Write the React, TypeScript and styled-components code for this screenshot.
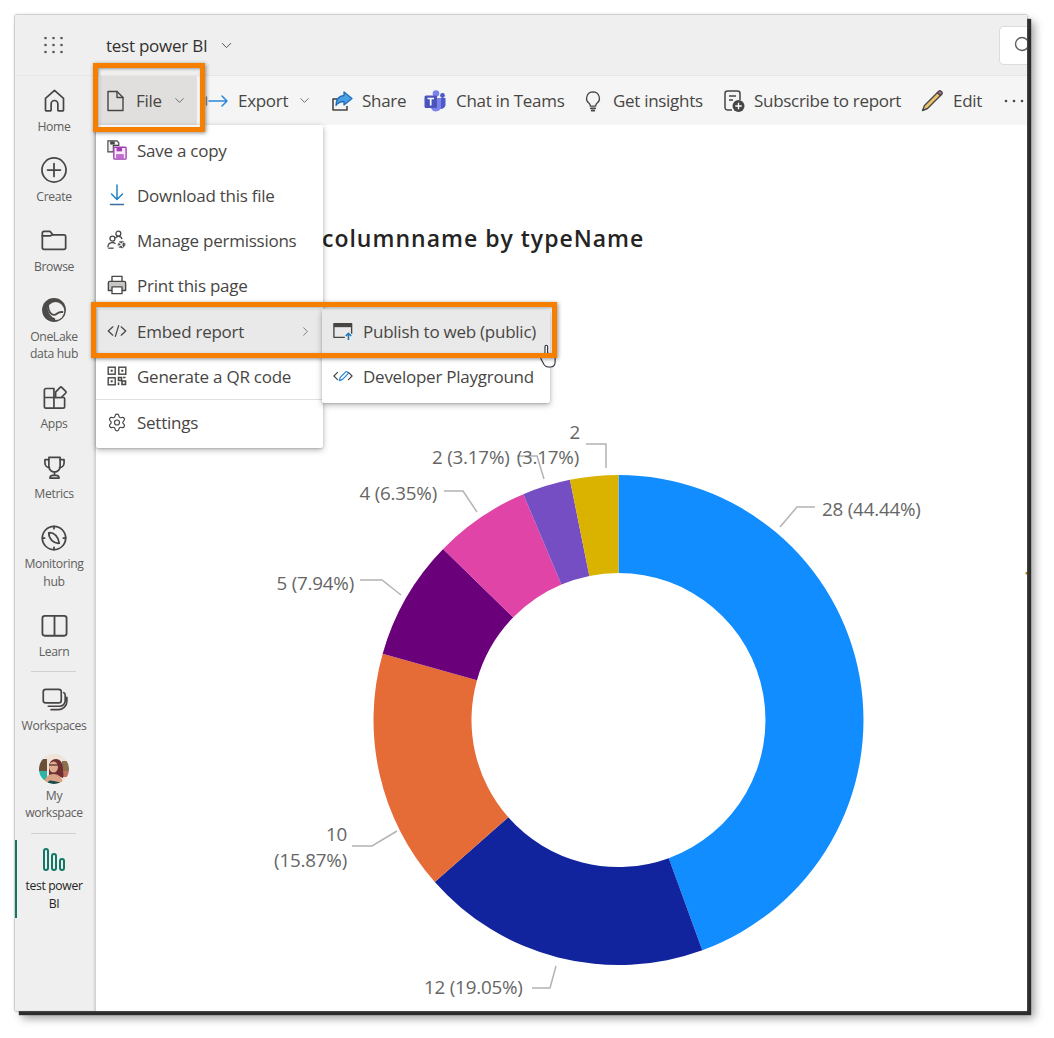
import React from "react";
import styled, { createGlobalStyle } from "styled-components";
import { ChevronDown, ChevronRight, Settings } from "lucide-react";

const INK = "#484644";
const FONT = `"Open Sans", "Noto Sans", Arial, sans-serif`;

const GlobalStyle = createGlobalStyle`
  html, body {
    margin: 0;
    background: #fff;
    font-family: ${FONT};
  }
`;

const Page = styled.div`
  width: 1054px;
  height: 1038px;
  padding: 15px 0 0 15px;
  box-sizing: border-box;
  overflow: hidden;
`;

const Frame = styled.div`
  position: relative;
  width: 1012px;
  height: 996px;
  background: #fff;
  display: flex;
  flex-direction: column;
  box-shadow: 0 0 2px #777, 4px 4px 1px #2c2c2c, 7px 7px 9px rgba(0, 0, 0, 0.4);
`;

const TopBar = styled.header`
  height: 60px;
  flex: none;
  display: flex;
  align-items: center;
  background: #efefef;
  overflow: hidden;
`;

const Waffle = styled.div`
  width: 78px;
  flex: none;
  display: flex;
  justify-content: center;
`;

const ReportName = styled.div`
  display: flex;
  align-items: center;
  gap: 11px;
  margin-left: 13px;
  flex: 1;
  font-size: 17px;
  letter-spacing: -0.25px;
  color: #323130;
`;

const SearchBox = styled.div`
  width: 28px;
  height: 39px;
  margin-top: 1px;
  background: #fff;
  border: 1px solid #dcdcdc;
  border-right: 0;
  border-radius: 5px 0 0 5px;
  display: flex;
  align-items: center;
  padding-left: 14px;
  flex: none;
  box-sizing: border-box;
  overflow: hidden;
`;

const SearchGlyph = styled.svg`
  flex: none;
`;

const Body = styled.div`
  flex: 1;
  min-height: 0;
  display: flex;
`;

const Rail = styled.nav`
  width: 81px;
  flex: none;
  background: #efefef;
  box-shadow: inset -2px 0 2px rgba(0, 0, 0, 0.12);
  display: flex;
  flex-direction: column;
  align-items: stretch;
`;

const RailItem = styled.a<{ $active?: boolean; $gap?: number }>`
  display: flex;
  flex-direction: column;
  align-items: center;
  margin-top: ${(p) => p.$gap ?? 0}px;
  margin-right: 5px;
  padding: ${(p) => (p.$active ? "8px 0 6px" : "13px 0 10px")};
  font-size: 12.2px;
  font-weight: ${(p) => (p.$active ? 500 : 400)};
  line-height: 17.5px;
  letter-spacing: -0.35px;
  text-align: center;
  color: ${(p) => (p.$active ? "#252423" : "#605e5c")};
  border-left: 2px solid ${(p) => (p.$active ? "#117865" : "transparent")};
`;

const RailIcon = styled.span`
  height: 24px;
  margin-bottom: 5.5px;
  display: flex;
  align-items: center;
  justify-content: center;
`;

const RailRule = styled.hr`
  width: 45px;
  height: 1px;
  margin: 1px 0 0 16px;
  border: 0;
  background: #d2d0ce;
`;

const Main = styled.main`
  position: relative;
  flex: 1;
  min-width: 0;
  display: flex;
  flex-direction: column;
`;

const Toolbar = styled.div`
  height: 50px;
  flex: none;
  display: flex;
  align-items: center;
  padding-left: 4px;
  background: #f5f5f5;
  border-top: 1px solid #e6e6e6;
  box-sizing: border-box;
  overflow: hidden;
  white-space: nowrap;
`;

const ToolButton = styled.div<{ $width: number; $open?: boolean; $inset?: number }>`
  width: ${(p) => p.$width}px;
  flex: none;
  height: 50px;
  display: flex;
  align-items: center;
  gap: 9px;
  box-sizing: border-box;
  padding-left: ${(p) => p.$inset ?? 0}px;
  font-size: 17px;
  letter-spacing: -0.3px;
  color: ${INK};
  background: ${(p) => (p.$open ? "#e1dfdd" : "transparent")};
`;

const ToolChevron = styled(ChevronDown)<{ $shift: number }>`
  margin-left: ${(p) => p.$shift}px;
  color: ${INK};
`;

const Overflow = styled.svg`
  flex: none;
`;

const Canvas = styled.section`
  flex: 1;
  min-height: 0;
  display: flex;
  flex-direction: column;
`;

const ChartTitle = styled.h2`
  margin: 96px 0 0 226px;
  height: 35px;
  font-family: "Open Sans", sans-serif;
  font-size: 23px;
  line-height: 35px;
  font-weight: 600;
  letter-spacing: 1px;
  color: #252423;
  white-space: nowrap;
`;

const Chart = styled.svg`
  display: block;
  margin-top: 44px;
  font-family: ${FONT};
`;

const Menu = styled.div`
  position: absolute;
  background: #fff;
  border-radius: 2px;
  box-shadow: 0 2px 6px rgba(0, 0, 0, 0.28), 0 1px 2px rgba(0, 0, 0, 0.15);
`;

const FileMenu = styled(Menu)`
  left: 0;
  top: 50px;
  width: 227px;
  padding: 2.5px 0 3.5px;
  z-index: 2;
`;

const SubMenu = styled(Menu)`
  left: 226px;
  top: 183.5px;
  width: 228px;
  padding: 0 0 4.5px;
  z-index: 3;
`;

const MenuItem = styled.div<{ $hot?: boolean; $gap?: number }>`
  height: 45px;
  display: flex;
  align-items: center;
  gap: 10px;
  margin-top: ${(p) => p.$gap ?? 0}px;
  padding: 0 11px;
  font-size: 17px;
  letter-spacing: -0.25px;
  color: ${INK};
  white-space: nowrap;
  background: ${(p) => (p.$hot ? "#e9e9e9" : "transparent")};
`;

const MenuIcon = styled.span`
  width: 20px;
  height: 22px;
  flex: none;
  display: flex;
  align-items: center;
  justify-content: center;
`;

const MenuRule = styled.hr`
  height: 1px;
  margin: 0;
  border: 0;
  background: #e1dfdd;
`;

const Arrow = styled.span`
  margin-left: auto;
  display: flex;
  margin-right: -1px;
`;

const Callout = styled.div<{ $x: number; $y: number; $w: number; $h: number }>`
  position: absolute;
  left: ${(p) => p.$x}px;
  top: ${(p) => p.$y}px;
  width: ${(p) => p.$w}px;
  height: ${(p) => p.$h}px;
  border: 5px solid #f77f00;
  box-sizing: border-box;
  box-shadow: 1px 1px 4px rgba(0, 0, 0, 0.45), inset 1px 1px 3px rgba(0, 0, 0, 0.35);
  z-index: 5;
  pointer-events: none;
`;

const HandCursor = styled.svg`
  position: absolute;
  left: 525px;
  top: 329px;
  z-index: 4;
`;

type SvgProps = { size?: number; children: React.ReactNode; sw?: number };

function Glyph({ size = 24, sw = 1.5, children }: SvgProps) {
  return (
    <svg
      width={size}
      height={size}
      viewBox="0 0 24 24"
      fill="none"
      stroke={INK}
      strokeWidth={sw}
      strokeLinecap="round"
      strokeLinejoin="round"
    >
      {children}
    </svg>
  );
}

const railIcons: Record<string, React.ReactNode> = {
  home: (
    <Glyph size={27}>
      <path d="M4 20.500V10.200L12 3l8 7.200v10.300a.8.8 0 0 1-.8.8h-3.400a.8.8 0 0 1-.8-.8V15a3 3 0 0 0-6 0v5.500a.8.8 0 0 1-.8.8H4.800a.8.8 0 0 1-.8-.8z" />
    </Glyph>
  ),
  create: (
    <Glyph size={28}>
      <circle cx="12" cy="12" r="10.300" />
      <path d="M12 6.500v11M6.500 12h11" />
    </Glyph>
  ),
  browse: (
    <Glyph size={28}>
      <path d="M2 18.500V6a1.500 1.500 0 0 1 1.500-1.500h5l2.500 3h9.500A1.500 1.500 0 0 1 22 9v9.500a1.500 1.500 0 0 1-1.500 1.500h-17A1.500 1.500 0 0 1 2 18.500z" />
      <path d="M2 8.500h6.500l2.500-1" />
    </Glyph>
  ),
  lake: (
    <svg width="26" height="26" viewBox="0 0 24 24" fill="none">
      <circle cx="12" cy="12" r="11" fill="#4d4b49" />
      <ellipse cx="13.500" cy="13" rx="8" ry="8.300" fill="#efefef" />
      <path d="M6.500 7.500c0 5 2.500 9.500 6 9 3-.4 2.500-3.500 8-2.500" stroke="#4d4b49" strokeWidth="1.700" />
      <path d="M5 8c-.5 6 3 12 8 13" stroke="#4d4b49" strokeWidth="2.200" />
    </svg>
  ),
  apps: (
    <Glyph size={27}>
      <path d="M3 12h8.500v9.500H4.500A1.500 1.500 0 0 1 3 20zM3 12V5.500A1.500 1.500 0 0 1 4.500 4h7v17.500M11.500 12H20a1 1 0 0 1 1 1v7a1.500 1.500 0 0 1-1.500 1.500h-8" />
      <path d="M13 7.200l4-4.200a1 1 0 0 1 1.400 0l3.600 3.600a1 1 0 0 1 0 1.400L18 12h-5z" fill="#efefef" />
    </Glyph>
  ),
  metrics: (
    <Glyph size={27}>
      <path d="M7 3h10v8a5 5 0 0 1-10 0z" />
      <path d="M7 5H3.500v3A4 4 0 0 0 7.500 12M17 5h3.500v3a4 4 0 0 1-4 4" />
      <path d="M12 16v3M8 21.500c0-1.500 1-2.500 2.500-2.500h3c1.500 0 2.500 1 2.500 2.500z" />
    </Glyph>
  ),
  monitor: (
    <Glyph size={28} sw={1.500}>
      <circle cx="12" cy="12" r="10" />
      <path d="M12 2v2M12 20v2M2 12h2M20 12h2" />
      <path d="M7.500 7.500c4.500-.5 8.500 3.500 9 9-4.500.5-9-3.500-9-9z" />
    </Glyph>
  ),
  learn: (
    <Glyph size={29}>
      <rect x="2" y="4" width="20" height="16.500" rx="2" />
      <path d="M12 4.500v15.500" />
    </Glyph>
  ),
  workspaces: (
    <Glyph size={27}>
      <rect x="2" y="3" width="16" height="12" rx="2.200" />
      <path d="M20.300 6c.8.400 1.200 1.200 1.200 2v5a5 5 0 0 1-5 5H6.500" />
      <path d="M23 10v3.500a7.500 7.500 0 0 1-7.500 7.500H9" />
    </Glyph>
  ),
};

function Avatar() {
  return (
    <svg width="30" height="30" viewBox="0 0 30 30">
      <defs>
        <clipPath id="avatarClip">
          <circle cx="15" cy="15" r="15" />
        </clipPath>
        <filter id="avatarSoft">
          <feGaussianBlur stdDeviation="0.7" />
        </filter>
      </defs>
      <g clipPath="url(#avatarClip)">
        <g filter="url(#avatarSoft)">
          <rect width="30" height="30" fill="#efe3da" />
          <rect x="-1" y="5" width="9" height="12" fill="#6b5138" />
          <rect x="23" y="7" width="8" height="10" fill="#8a6f4c" />
          <rect x="-1" y="17" width="9" height="9" fill="#2fb3a6" />
          <rect x="24" y="17" width="7" height="6" fill="#c4705f" />
          <path d="M10 13c0-5 3-8 7-8 5 0 7 5 7 10 0 4 1 6 0 9l-5-2-9-1z" fill="#6e2f30" />
          <ellipse cx="14.500" cy="13" rx="4.500" ry="5.500" fill="#e0ad90" />
          <path d="M10 11h9" stroke="#4a2a25" strokeWidth="1.200" />
          <path d="M5 31c0-7 4-11 9.500-11S24 24 24 31z" fill="#d9a285" />
          <path d="M8 31c1-5 3-5 6.500-4S21 27 22 31z" fill="#154a48" />
        </g>
      </g>
    </svg>
  );
}

function ReportGlyph() {
  return (
    <svg width="24" height="24" viewBox="0 0 24 24" fill="none" stroke="#117865" strokeWidth="2">
      <rect x="2" y="1" width="4" height="21" rx="2" />
      <rect x="10" y="6" width="4" height="16" rx="2" />
      <rect x="18" y="11" width="4" height="11" rx="2" />
    </svg>
  );
}

const NAV = [
  { key: "home", lines: ["Home"] },
  { key: "create", lines: ["Create"] },
  { key: "browse", lines: ["Browse"] },
  { key: "lake", lines: ["OneLake", "data hub"] },
  { key: "apps", lines: ["Apps"] },
  { key: "metrics", lines: ["Metrics"] },
  { key: "monitor", lines: ["Monitoring", "hub"] },
  { key: "learn", lines: ["Learn"] },
];

function RailEntry({ icon, lines, active, gap }: { icon: React.ReactNode; lines: string[]; active?: boolean; gap?: number }) {
  return (
    <RailItem $active={active} $gap={gap}>
      <RailIcon>{icon}</RailIcon>
      {lines.map((line) => (
        <span key={line}>{line}</span>
      ))}
    </RailItem>
  );
}

const toolIcons = {
  file: (
    <Glyph size={24} sw={1.400}>
      <path d="M5 2.500h9l6 6v13H5z" />
      <path d="M14 2.500v6h6" />
    </Glyph>
  ),
  export: (
    <svg width="24" height="24" viewBox="0 0 24 24" fill="none" strokeLinecap="round">
      <path d="M1.500 8v8" stroke="#8a8886" strokeWidth="1.500" />
      <path d="M4 12h18M17 7l5 5-5 5" stroke="#2b88d8" strokeWidth="1.500" strokeLinejoin="round" />
    </svg>
  ),
  share: (
    <svg width="22" height="22" viewBox="0 0 22 22" fill="none" strokeLinejoin="round">
      <path d="M2 8.500V20h14v-4" stroke={INK} strokeWidth="1.600" />
      <path d="M2 9h4" stroke={INK} strokeWidth="1.600" />
      <path d="M13 2l8 6.500-8 6.500v-3.500c-4 0-6 1-8 4 0-6 3-9.500 8-10z" fill="#4aa0e6" stroke="#1f6fb5" strokeWidth="1.300" />
    </svg>
  ),
  teams: (
    <svg width="23" height="24" viewBox="0 0 23 24">
      <circle cx="12" cy="4.500" r="3.300" fill="#7b83eb" />
      <circle cx="18.500" cy="6.500" r="2.400" fill="#5059c9" />
      <path d="M14 9h7.500v7a4 4 0 0 1-7 2.500z" fill="#5059c9" />
      <path d="M7 9h10v9a5.200 5.200 0 0 1-10 1z" fill="#7b83eb" />
      <rect x="0.500" y="6.500" width="12.500" height="12.500" rx="1.500" fill="#4b53bc" />
      <path d="M3.500 9.500h6.500M6.700 9.500v7" stroke="#fff" strokeWidth="1.700" />
    </svg>
  ),
  insights: (
    <Glyph size={22} sw={1.400}>
      <path d="M12 2a7 7 0 0 0-4 12.700c.8.800 1 1.500 1 2.800h6c0-1.300.2-2 1-2.800A7 7 0 0 0 12 2z" />
      <path d="M9.500 20h5M10.500 22.500h3" strokeWidth="1.800" />
    </Glyph>
  ),
  subscribe: (
    <svg width="22" height="24" viewBox="0 0 22 24" fill="none">
      <path d="M9 21H4.500A2.500 2.500 0 0 1 2 18.500v-14A2.500 2.500 0 0 1 4.500 2h10A2.500 2.500 0 0 1 17 4.500V11" stroke={INK} strokeWidth="1.500" />
      <path d="M6 7h7M6 11h4" stroke={INK} strokeWidth="1.500" />
      <circle cx="15.500" cy="17" r="6" fill={INK} />
      <path d="M15.500 13.800v6.400M12.300 17h6.400" stroke="#fff" strokeWidth="1.300" />
    </svg>
  ),
  edit: (
    <svg width="24" height="24" viewBox="0 0 24 24" strokeLinejoin="round">
      <path d="M17.500 3.500l3 3L7.500 19.500l-5 2 2-5z" fill="#eac36a" stroke={INK} strokeWidth="1.400" />
      <path d="M17.500 3.500l1.300-1.300a1.500 1.500 0 0 1 2.100 0l.9.900a1.500 1.500 0 0 1 0 2.100l-1.300 1.300z" fill="#b56bb0" stroke={INK} strokeWidth="1.400" />
    </svg>
  ),
};

const menuIcons = {
  save: (
    <svg width="22" height="22" viewBox="0 0 22 22" fill="none">
      <path d="M1 1h10l2 2v3H7v7H1z" fill="#f3f2f1" stroke={INK} strokeWidth="1.300" />
      <rect x="3.500" y="1.500" width="5" height="3.500" fill={INK} />
      <rect x="7.500" y="8" width="13.500" height="13" rx="1" fill="#fbe9fb" stroke="#a33cb5" strokeWidth="1.500" />
      <rect x="10.500" y="8.500" width="6" height="4" fill="#a33cb5" />
      <rect x="10" y="15.500" width="8.500" height="5" fill="#a33cb5" opacity="0.7" />
    </svg>
  ),
  download: (
    <svg width="20" height="22" viewBox="0 0 20 22" fill="none" stroke="#2382c5" strokeWidth="1.500" strokeLinecap="round" strokeLinejoin="round">
      <path d="M10 1v14M4.500 10l5.500 5.500 5.500-5.500" />
      <path d="M3.500 20.500h13" stroke="#3b6ea5" />
    </svg>
  ),
  permissions: (
    <svg width="22" height="22" viewBox="0 0 22 22" fill="none" stroke={INK} strokeWidth="1.400">
      <circle cx="12.500" cy="4" r="2.700" />
      <circle cx="6" cy="9.500" r="2.700" />
      <path d="M1 19c0-3.500 2-5 5-5 1.500 0 2.500.400 3.300 1" />
      <path d="M9 9c1-1.300 2-2 3.500-2 2 0 3.500 1 4 3" />
      <path d="M1.300 20h6" />
      <circle cx="16" cy="16" r="2.500" strokeWidth="2.400" strokeDasharray="2 1.100" />
      <circle cx="16" cy="16" r="3.600" stroke="#777" strokeWidth="1.400" strokeDasharray="1.800 1.600" />
    </svg>
  ),
  print: (
    <svg width="22" height="22" viewBox="0 0 22 22" fill="none" stroke={INK} strokeWidth="1.500" strokeLinejoin="round">
      <path d="M5.500 7V1.500h11V7" />
      <path d="M5.500 17H1.500V8.500A1.500 1.500 0 0 1 3 7h16a1.500 1.500 0 0 1 1.500 1.500V17h-4" fill="#c8c6c4" />
      <rect x="5.500" y="13" width="11" height="7.500" fill="#fff" />
    </svg>
  ),
  embed: (
    <Glyph size={20} sw={1.500}>
      <path d="M7 7l-5.500 5L7 17M17 7l5.500 5-5.500 5M14 5.500l-4 13" />
    </Glyph>
  ),
  qr: (
    <svg width="20" height="20" viewBox="0 0 20 20" fill="none" stroke={INK} strokeWidth="1.400">
      <rect x="1.200" y="1.200" width="7" height="7" />
      <rect x="11.800" y="1.200" width="7" height="7" />
      <rect x="1.200" y="11.800" width="7" height="7" />
      <rect x="3.700" y="3.700" width="2" height="2" fill={INK} stroke="none" />
      <rect x="14.300" y="3.700" width="2" height="2" fill={INK} stroke="none" />
      <rect x="3.700" y="14.300" width="2" height="2" fill={INK} stroke="none" />
      <path d="M11.500 11.500h3v3h-3zM15 15h3.500v3.500H15zM16 11.500h2.500M11.500 16.500v2.500" strokeWidth="1.600" />
    </svg>
  ),
  publish: (
    <svg width="22" height="20" viewBox="0 0 22 20" fill="none" strokeLinejoin="round">
      <path d="M13 17H1V2h19.500v11" stroke={INK} strokeWidth="1.500" />
      <rect x="1" y="2" width="19.500" height="3.800" fill={INK} />
      <path d="M17 20v-7M14 15.500l3-3 3 3" stroke="#1f77b8" strokeWidth="1.700" />
    </svg>
  ),
  playground: (
    <svg width="22" height="20" viewBox="0 0 22 20" fill="none" strokeLinecap="round" strokeLinejoin="round">
      <path d="M5 6l-4 4 4 4M17 6l4 4-4 4" stroke={INK} strokeWidth="1.300" />
      <path d="M7 15l1-3.500 6-6c1-1 3.500 1 2.500 2.200l-6 6z" stroke="#2b88d8" strokeWidth="1.400" />
    </svg>
  ),
};

/* donut slices, clockwise from 12 o'clock */
const SLICES = [
  { value: 28, color: "#118DFF" },
  { value: 12, color: "#12239E" },
  { value: 10, color: "#E66C37" },
  { value: 5, color: "#6B007B" },
  { value: 4, color: "#E044A7" },
  { value: 2, color: "#744EC2" },
  { value: 2, color: "#D9B300" },
];

const CX = 618.5;
const CY = 720;
const R1 = 245;
const R0 = 147;

function slicePath(from: number, to: number) {
  const point = (r: number, t: number): string => {
    const a = (t / 63) * Math.PI * 2 - Math.PI / 2;
    return `${(CX + r * Math.cos(a)).toFixed(2)} ${(CY + r * Math.sin(a)).toFixed(2)}`;
  };
  const large = to - from > 31.5 ? 1 : 0;
  return `M${point(R1, from)} A${R1} ${R1} 0 ${large} 1 ${point(R1, to)} L${point(R0, to)} A${R0} ${R0} 0 ${large} 0 ${point(R0, from)} Z`;
}

const LEADERS = [
  "586,444 606,444 606,468",
  "517,456 537,456 544,479",
  "444,491 463,491 477,512",
  "360,580 382,580 401,595",
  "352,846 372,846 397,831",
  "532,988 550,988 556,966",
  "815,507 797,507 780,527",
];

const LABELS: { x: number; y: number; text: string; anchor?: "end" }[] = [
  { x: 580, y: 439, text: "2", anchor: "end" },
  { x: 432, y: 464, text: "2 (3.17%)" },
  { x: 579, y: 464, text: "(3.17%)", anchor: "end" },
  { x: 437, y: 500, text: "4 (6.35%)", anchor: "end" },
  { x: 354, y: 590, text: "5 (7.94%)", anchor: "end" },
  { x: 347, y: 841, text: "10", anchor: "end" },
  { x: 347, y: 867, text: "(15.87%)", anchor: "end" },
  { x: 424, y: 994, text: "12 (19.05%)" },
  { x: 822, y: 516, text: "28 (44.44%)" },
];

function Donut() {
  let start = 0;
  return (
    <Chart width="931" height="711" viewBox="96 300 931 711">
      {SLICES.map((slice) => {
        const d = slicePath(start, start + slice.value);
        start += slice.value;
        return <path key={slice.color} d={d} fill={slice.color} />;
      })}
      {LEADERS.map((points) => (
        <polyline key={points} points={points} fill="none" stroke="#b3b3b3" strokeWidth="1.500" />
      ))}
      {LABELS.map((label) => (
        <text key={label.x + label.text} x={label.x} y={label.y} textAnchor={label.anchor ?? "start"} fontSize="18.800" letterSpacing="-0.2" fill="#666">
          {label.text}
        </text>
      ))}
      <rect x="1025.500" y="572" width="1.500" height="2.500" fill="#b8860b" />
    </Chart>
  );
}

export default function App() {
  return (
    <>
      <GlobalStyle />
      <Page>
        <Frame>
          <TopBar>
            <Waffle>
              <svg width="20" height="17" viewBox="0 0 20 17" fill="#555">
                {[1.500, 9.500, 17.500].map((x) =>
                  [1, 8, 15].map((y) => <circle key={`${x}-${y}`} cx={x} cy={y} r="1.300" />)
                )}
              </svg>
            </Waffle>
            <ReportName>
              test power BI
              <ChevronDown size={17} strokeWidth={1.300} color={INK} />
            </ReportName>
            <SearchBox>
              <SearchGlyph width="20" height="20" viewBox="0 0 20 20" fill="none" stroke="#605e5c" strokeWidth="1.400">
                <circle cx="8" cy="8" r="6.500" />
                <path d="M13 13l6 6" />
              </SearchGlyph>
            </SearchBox>
          </TopBar>
          <Body>
            <Rail>
              {NAV.map((item) => (
                <RailEntry key={item.key} icon={railIcons[item.key]} lines={item.lines} />
              ))}
              <RailRule />
              <RailEntry gap={2} icon={railIcons.workspaces} lines={["Workspaces"]} />
              <RailEntry icon={<Avatar />} lines={["My", "workspace"]} />
              <RailRule />
              <RailEntry active gap={6} icon={<ReportGlyph />} lines={["test power", "BI"]} />
            </Rail>
            <Main>
              <Toolbar>
                <ToolButton $open $width={97} $inset={3}>
                  {toolIcons.file}
                  File
                  <ToolChevron $shift={1} size={15} strokeWidth={1.200} />
                </ToolButton>
                <ToolButton $width={134} $inset={8}>
                  {toolIcons.export}
                  Export
                  <ToolChevron $shift={0} size={15} strokeWidth={1.200} />
                </ToolButton>
                <ToolButton $width={93}>{toolIcons.share}Share</ToolButton>
                <ToolButton $width={158}>{toolIcons.teams}Chat in Teams</ToolButton>
                <ToolButton $width={141}>{toolIcons.insights}Get insights</ToolButton>
                <ToolButton $width={197}>{toolIcons.subscribe}Subscribe to report</ToolButton>
                <ToolButton $width={84}>{toolIcons.edit}Edit</ToolButton>
                <Overflow width="20" height="4" viewBox="0 0 20 4" fill={INK}>
                  <circle cx="2" cy="2" r="1.300" />
                  <circle cx="10" cy="2" r="1.300" />
                  <circle cx="18" cy="2" r="1.300" />
                </Overflow>
              </Toolbar>
              <Canvas>
                <ChartTitle>columnname by typeName</ChartTitle>
                <Donut />
              </Canvas>
              <FileMenu>
                <MenuItem><MenuIcon>{menuIcons.save}</MenuIcon>Save a copy</MenuItem>
                <MenuItem><MenuIcon>{menuIcons.download}</MenuIcon>Download this file</MenuItem>
                <MenuItem><MenuIcon>{menuIcons.permissions}</MenuIcon>Manage permissions</MenuItem>
                <MenuItem><MenuIcon>{menuIcons.print}</MenuIcon>Print this page</MenuItem>
                <MenuItem $hot $gap={1}>
                  <MenuIcon>{menuIcons.embed}</MenuIcon>Embed report
                  <Arrow><ChevronRight size={15} strokeWidth={1.200} color="#605e5c" /></Arrow>
                </MenuItem>
                <MenuItem><MenuIcon>{menuIcons.qr}</MenuIcon>Generate a QR code</MenuItem>
                <MenuRule />
                <MenuItem><MenuIcon><Settings size={21} strokeWidth={1.400} color={INK} /></MenuIcon>Settings</MenuItem>
                <SubMenu>
                  <MenuItem $hot><MenuIcon>{menuIcons.publish}</MenuIcon>Publish to web (public)</MenuItem>
                  <MenuItem><MenuIcon>{menuIcons.playground}</MenuIcon>Developer Playground</MenuItem>
                </SubMenu>
              </FileMenu>
            </Main>
          </Body>
          <Callout $x={78} $y={48} $w={112} $h={69} />
          <Callout $x={76} $y={287} $w={466} $h={56} />
          <HandCursor width="18" height="24" viewBox="0 0 18 24" fill="#fff" stroke="#2b2b3a" strokeWidth="1.100" strokeLinejoin="round">
            <path d="M5 12V2.500a1.300 1.300 0 0 1 2.600 0V9l5 1.500c1.500.500 2.500 1.500 2.500 3V18c0 3-2 5-5 5H8c-2 0-3-1-4-2.500L1 15c-.6-1.500 1-2.500 2-1.500z" />
          </HandCursor>
        </Frame>
      </Page>
    </>
  );
}
